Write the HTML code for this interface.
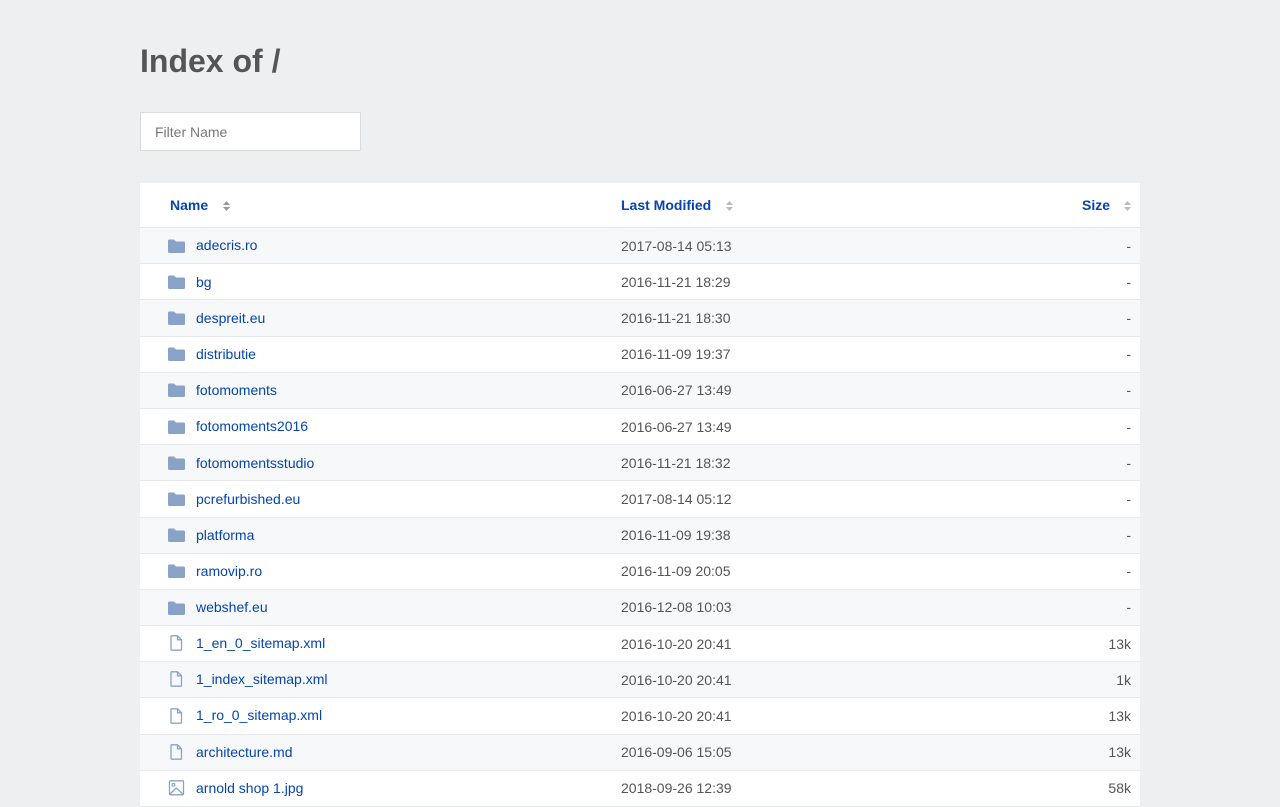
<!DOCTYPE html>
<html><head><meta charset="utf-8"><style>
body{margin:0;background:#eeeff1;font-family:"Liberation Sans",sans-serif;font-size:14px;color:#555}
.wrap{position:absolute;left:140px;width:1000px;top:0}
h1{font-size:32px;font-weight:bold;color:#555;margin:0;position:absolute;top:42px;left:0;line-height:38px}
.filter{position:absolute;top:112px;left:0;width:219px;height:37px;border:1px solid #d9dcdf;background:#fff;box-sizing:content-box}
.filter span{position:absolute;left:14px;top:11px;color:#777;font-size:14px}
table{position:absolute;top:183px;left:0;width:1000px;border-collapse:collapse;background:#fff}
th{height:44px;text-align:left;font-weight:bold;color:#0645ad;font-size:14px;border-bottom:1px solid #e5e7ea;padding:0}
td{height:35.2px;border-bottom:1px solid #e5e7ea;padding:0;vertical-align:middle}
tr.s td{background:#f6f8fa}
a{color:#0645ad;text-decoration:none}
.n{padding-left:28px;width:453px}
.n svg{vertical-align:middle;margin-right:11px;position:relative;top:-1px}
.r{text-align:right;padding-right:9px}
.sort{display:inline-block;vertical-align:middle;margin-left:14px}
</style></head><body><div class="wrap">
<h1>Index of /</h1>
<div class="filter"><span>Filter Name</span></div>
<table>
<tr><th style="padding-left:30px">Name<svg class="sort" width="9" height="12" viewBox="0 0 9 12"><path d="M1 5L4.5 1 8 5z M1 7L4.5 11 8 7z" fill="#999"/></svg></th><th style="width:300px">Last Modified<svg class="sort" width="9" height="12" viewBox="0 0 9 12"><path d="M1 5L4.5 1 8 5z M1 7L4.5 11 8 7z" fill="#bbb"/></svg></th><th class="r" style="padding-right:8px">Size<svg class="sort" style="margin-left:13px" width="9" height="12" viewBox="0 0 9 12"><path d="M1 5L4.5 1 8 5z M1 7L4.5 11 8 7z" fill="#bbb"/></svg></th></tr>
</table>
</div>
<script>
var rows=[["adecris.ro","2017-08-14 05:13","-","d"],["bg","2016-11-21 18:29","-","d"],["despreit.eu","2016-11-21 18:30","-","d"],["distributie","2016-11-09 19:37","-","d"],["fotomoments","2016-06-27 13:49","-","d"],["fotomoments2016","2016-06-27 13:49","-","d"],["fotomomentsstudio","2016-11-21 18:32","-","d"],["pcrefurbished.eu","2017-08-14 05:12","-","d"],["platforma","2016-11-09 19:38","-","d"],["ramovip.ro","2016-11-09 20:05","-","d"],["webshef.eu","2016-12-08 10:03","-","d"],["1_en_0_sitemap.xml","2016-10-20 20:41","13k","f"],["1_index_sitemap.xml","2016-10-20 20:41","1k","f"],["1_ro_0_sitemap.xml","2016-10-20 20:41","13k","f"],["architecture.md","2016-09-06 15:05","13k","f"],["arnold shop 1.jpg","2018-09-26 12:39","58k","i"]];
var D='<svg width="17" height="14" viewBox="0 0 17 14"><path d="M0 2a1.5 1.5 0 0 1 1.5-1.5h4.5l2 2h7.5A1.5 1.5 0 0 1 17 4v8.5a1.5 1.5 0 0 1-1.5 1.5h-14A1.5 1.5 0 0 1 0 12.5z" fill="#8aa2c8"/></svg>';
var F='<svg width="17" height="16" viewBox="0 0 17 16"><path d="M3 .8h6.5l4 4v9.7a.7.7 0 0 1-.7.7H3.7a.7.7 0 0 1-.7-.7V1.5a.7.7 0 0 1 .7-.7zM9.5.8v4h4" fill="none" stroke="#8aa2c8" stroke-width="1.3"/></svg>';
var I='<svg width="17" height="16" viewBox="0 0 17 16"><rect x="1.5" y=".8" width="14" height="14" rx="1" fill="none" stroke="#8aa2c8" stroke-width="1.3"/><circle cx="5.5" cy="4.8" r="1.4" fill="none" stroke="#8aa2c8" stroke-width="1.1"/><path d="M2 14L8 8l7.5 6.5" fill="none" stroke="#8aa2c8" stroke-width="1.3"/></svg>';
var t=document.querySelector('table'),h='';
rows.forEach(function(r,i){h+='<tr'+(i%2==0?' class="s"':'')+'><td class="n">'+(r[3]=='d'?D:r[3]=='f'?F:I)+'<a>'+r[0]+'</a></td><td>'+r[1]+'</td><td class="r">'+r[2]+'</td></tr>';});
t.insertAdjacentHTML('beforeend',h);
</script>
</body></html>
